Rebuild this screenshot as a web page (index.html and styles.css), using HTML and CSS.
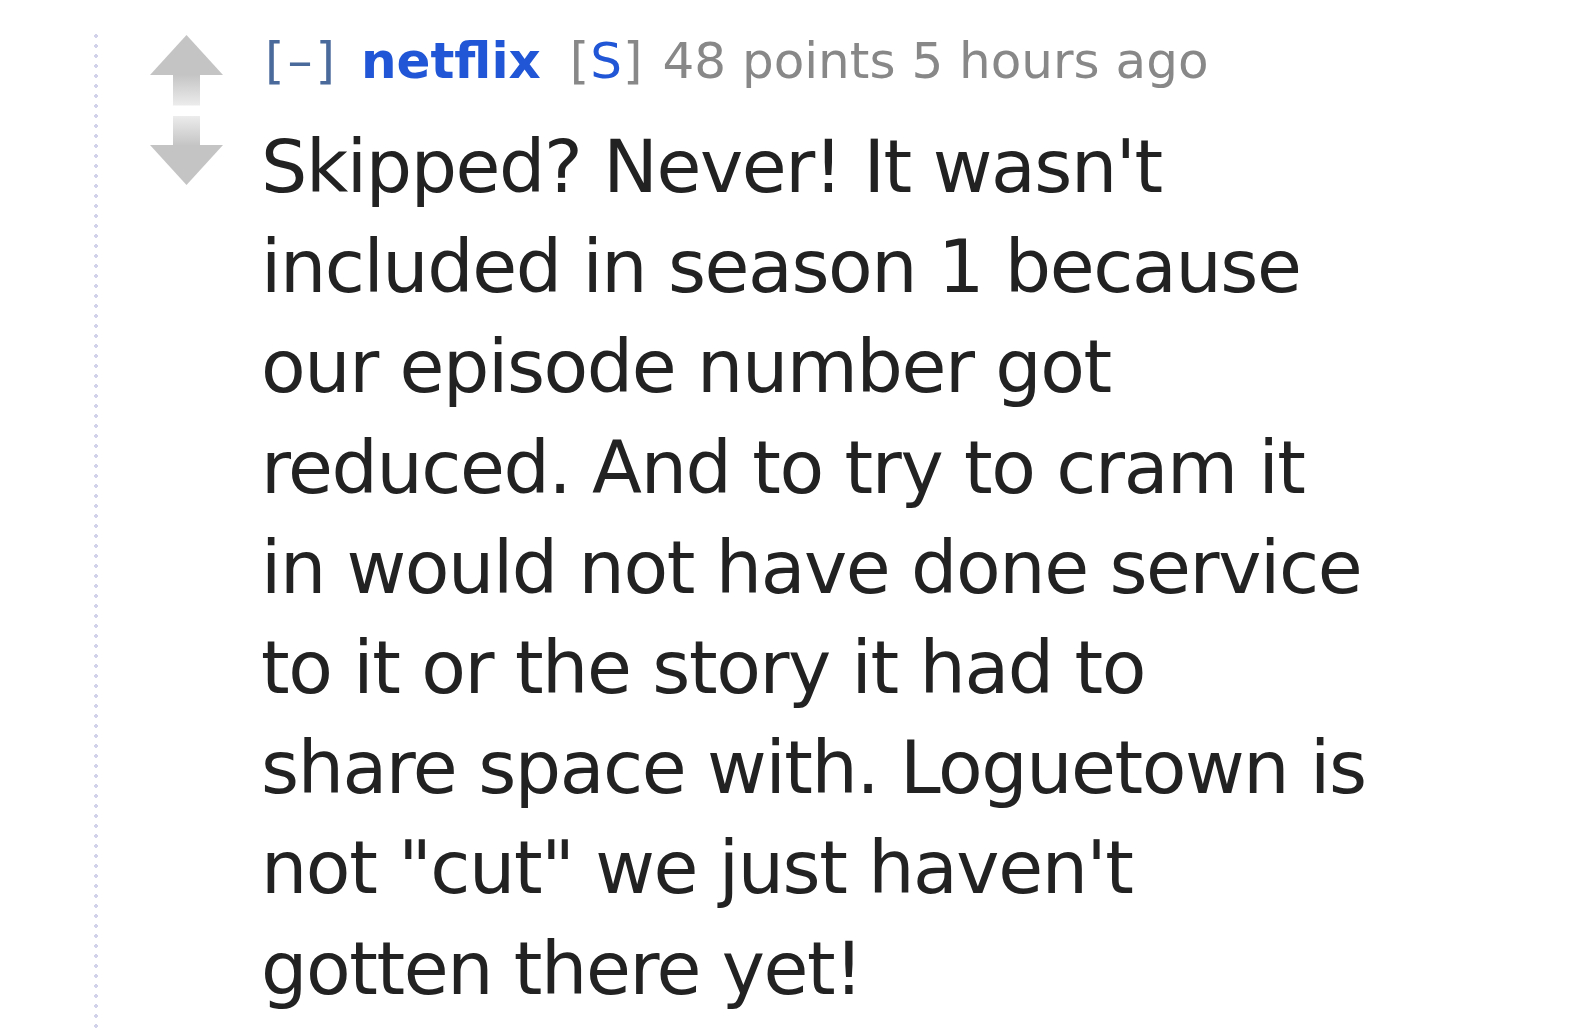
FILE: index.html
```html
<!DOCTYPE html>
<html>
<head>
<meta charset="utf-8">
<link rel="stylesheet" href="styles.css">
</head>
<body>
<div class="comment">
  <div class="thread-line"></div>
  <div class="votes">
    <svg width="73" height="150" viewBox="0 0 73 150">
      <defs>
        <linearGradient id="upShaft" x1="0" y1="0" x2="0" y2="1">
          <stop offset="0" stop-color="#c4c4c4"/>
          <stop offset="1" stop-color="#ececec"/>
        </linearGradient>
        <linearGradient id="downShaft" x1="0" y1="0" x2="0" y2="1">
          <stop offset="0" stop-color="#ececec"/>
          <stop offset="1" stop-color="#c4c4c4"/>
        </linearGradient>
      </defs>
      <polygon points="0,40 36.5,0 73,40" fill="#c4c4c4"/>
      <rect x="23" y="39.5" width="27" height="31" fill="url(#upShaft)"/>
      <rect x="23" y="81" width="27" height="30" fill="url(#downShaft)"/>
      <polygon points="0,110 73,110 36.5,150" fill="#c4c4c4"/>
    </svg>
  </div>
  <div class="entry">
    <p class="tagline"><span class="toggle">[–]</span> <span class="author">netflix</span> <span class="flag">[<span class="flag-s">S</span>]</span> <span class="score">48 points</span> <span class="time">5 hours ago</span></p>
    <div class="body">Skipped? Never! It wasn't<br>
included in season 1 because<br>
our episode number got<br>
reduced. And to try to cram it<br>
in would not have done service<br>
to it or the story it had to<br>
share space with. Loguetown is<br>
not "cut" we just haven't<br>
gotten there yet!</div>
  </div>
</div>
</body>
</html>
```
FILE: styles.css
```css
html, body {
  margin: 0;
  padding: 0;
  background: #ffffff;
}

body {
  font-family: "DejaVu Sans", Verdana, sans-serif;
  overflow: hidden;
}

.comment {
  display: flex;
  align-items: flex-start;
  min-height: 100vh;
}

.thread-line {
  align-self: stretch;
  width: 4px;
  margin-left: 94px;
  margin-top: 31px;
  background-image: radial-gradient(circle, #d2d2ea 1.6px, transparent 2px);
  background-size: 4px 10px;
  background-repeat: repeat-y;
}

.votes {
  margin-left: 52px;
  padding-top: 35px;
  width: 73px;
  flex: none;
}

.votes svg {
  display: block;
}

.entry {
  margin-left: 38px;
  width: 1200px;
}

.tagline {
  margin: 0 0 0 4px;
  padding-top: 31px;
  font-size: 50px;
  line-height: 60px;
  color: #888888;
  white-space: nowrap;
}

.toggle {
  color: #4a6a9c;
  letter-spacing: 3px;
}

.author {
  color: #2157d6;
  font-weight: bold;
  margin-left: 7px;
  margin-right: 13px;
}

.flag {
  color: #888888;
  letter-spacing: 1px;
}

.flag-s {
  color: #2157d6;
}

.score {
  margin-left: 3px;
}

.body {
  margin-top: 26px;
  font-size: 73px;
  line-height: 100.2px;
  letter-spacing: -1.4px;
  color: #222222;
  white-space: nowrap;
}
```
